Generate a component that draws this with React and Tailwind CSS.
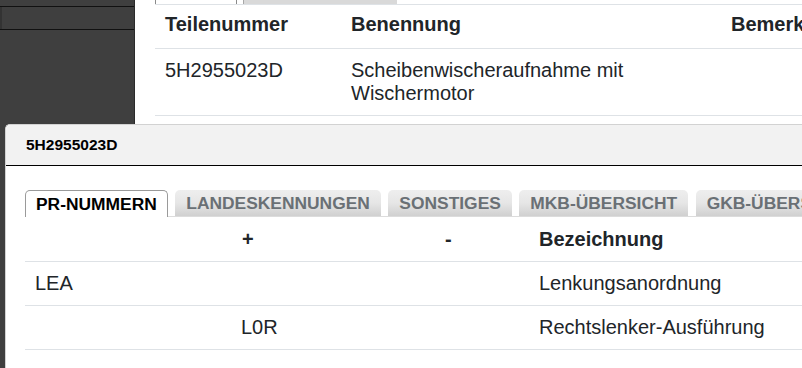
import React from 'react';

const font = { fontFamily: '"Liberation Sans", Arial, sans-serif' };

const tabs = ['PR-NUMMERN', 'LANDESKENNUNGEN', 'SONSTIGES', 'MKB-ÜBERSICHT', 'GKB-ÜBERSICHT'];

const prRows = [
  { a: 'LEA', b: '', c: '', d: 'Lenkungsanordnung' },
  { a: '', b: 'L0R', c: '', d: 'Rechtslenker-Ausführung' },
];

export default function App() {
  return (
    <div
      className="relative w-[802px] h-[368px] overflow-hidden bg-white flex text-[#212529]"
      style={font}
    >
      {/* Dark side panel */}
      <div className="w-[135px] shrink-0 bg-[#3f3f3f] border-r border-[#2b2b2b] flex flex-col">
        <div className="h-[6px]" />
        <div className="h-[24px] border-y border-[#111] flex">
          <div className="w-[2px] bg-[#333]" />
        </div>
      </div>

      {/* Parts list behind the dialog */}
      <div className="flex-1 pl-[20px] flex flex-col">
        <div className="h-[5px] flex border-b border-[#dee2e6]">
          <div className="w-[82px] border-x border-[#8a8a8a] bg-white" />
          <div className="ml-[6px] w-[154px] border-l border-[#a8a8a8] bg-[#d9d9d9]" />
        </div>
        <div className="grid grid-cols-[186px_380px_1fr] text-[20px] leading-[23px] whitespace-nowrap">
          <div className="h-[44px] pl-[10px] pt-[8px] font-bold border-b border-[#dee2e6]">Teilenummer</div>
          <div className="h-[44px] pl-[10px] pt-[8px] font-bold border-b border-[#dee2e6]">Benennung</div>
          <div className="h-[44px] pl-[10px] pt-[8px] font-bold border-b border-[#dee2e6]">Bemerkung</div>
          <div className="h-[67px] pl-[10px] pt-[10px] border-b border-[#dee2e6]">5H2955023D</div>
          <div className="h-[67px] pl-[10px] pt-[10px] border-b border-[#dee2e6] whitespace-normal">
            Scheibenwischeraufnahme mit<br />Wischermotor
          </div>
          <div className="h-[67px] border-b border-[#dee2e6]" />
        </div>
      </div>

      {/* Dialog */}
      <div className="absolute left-[5px] top-[124px] right-[-60px] bottom-0 bg-white rounded-tl-[5px] border-t border-l border-[#d2d2d2] flex flex-col">
        <div className="h-[41px] shrink-0 bg-[#f2f2f2] rounded-tl-[5px] border-b border-black flex items-center pl-[20px] text-[15.5px] font-bold text-black">
          5H2955023D
        </div>
        <div className="pl-[19px] pt-[24px] flex flex-col">
          <div className="flex items-end gap-[7.5px] border-b border-[#dcdcdc] h-[27px]">
            {tabs.map((t, i) =>
              i === 0 ? (
                <div
                  key={t}
                  className="h-[27px] shrink-0 -mb-px px-[10px] flex items-center bg-white border border-b-0 border-[#9a9a9a] rounded-t-[5px] text-[17.4px] font-bold text-black whitespace-nowrap"
                >
                  {t}
                </div>
              ) : (
                <div
                  key={t}
                  className="h-[26px] shrink-0 px-[11px] flex items-center rounded-t-[5px] bg-gradient-to-b from-[#eeeeee] via-[#e6e6e6] to-[#d0d0d0] text-[17.4px] font-bold text-[#6a7075] whitespace-nowrap"
                >
                  {t}
                </div>
              )
            )}
          </div>
          <div className="grid grid-cols-[206px_204px_94px_1fr] text-[20px] leading-[23px] whitespace-nowrap">
            <div className="h-[45px] border-b border-[#dee2e6]" />
            <div className="h-[45px] pl-[11px] flex items-center font-bold border-b border-[#dee2e6]">+</div>
            <div className="h-[45px] pl-[10px] flex items-center font-bold border-b border-[#dee2e6]">-</div>
            <div className="h-[45px] pl-[10px] flex items-center font-bold border-b border-[#dee2e6]">Bezeichnung</div>
            {prRows.map((r, i) => (
              <React.Fragment key={i}>
                <div className="h-[44px] pl-[10px] flex items-center border-b border-[#dee2e6]">{r.a}</div>
                <div className="h-[44px] pl-[10px] flex items-center border-b border-[#dee2e6]">{r.b}</div>
                <div className="h-[44px] pl-[10px] flex items-center border-b border-[#dee2e6]">{r.c}</div>
                <div className="h-[44px] pl-[10px] flex items-center border-b border-[#dee2e6]">{r.d}</div>
              </React.Fragment>
            ))}
          </div>
        </div>
      </div>
    </div>
  );
}
